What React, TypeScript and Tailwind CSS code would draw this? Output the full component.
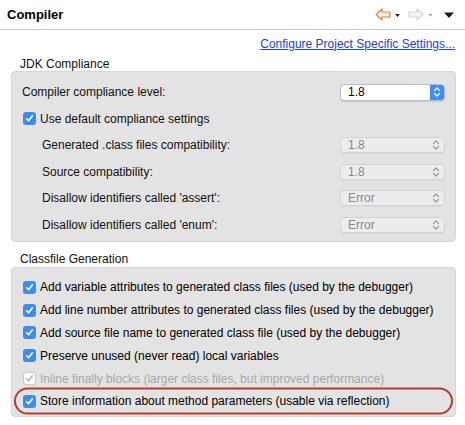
import React from 'react';

const font = { fontFamily: '"Liberation Sans", Arial, sans-serif' };

// Checkbox in mac style
const Check = ({ disabled = false }: { disabled?: boolean }) => (
  <span
    className={`flex h-[13px] w-[13px] shrink-0 items-center justify-center rounded-[3px] ${
      disabled ? 'border border-[#c9c9c9] bg-white' : 'bg-[#3b8df4]'
    }`}
  >
    <svg width="9" height="9" viewBox="0 0 9 9">
      <path
        d="M1.6 4.8 L3.6 6.8 L7.4 1.8"
        fill="none"
        stroke={disabled ? '#b5b5b5' : '#ffffff'}
        strokeWidth="1.6"
        strokeLinecap="round"
        strokeLinejoin="round"
      />
    </svg>
  </span>
);

const Chevrons = ({ color }: { color: string }) => (
  <svg width="8" height="12" viewBox="0 0 8 12">
    <path d="M1.5 4.5 L4 2 L6.5 4.5 M1.5 7.5 L4 10 L6.5 7.5" fill="none" stroke={color} strokeWidth="1.2" strokeLinecap="round" strokeLinejoin="round" />
  </svg>
);

const Select = ({ value, disabled = false }: { value: string; disabled?: boolean }) =>
  disabled ? (
    <div className="flex h-[16px] w-[105px] items-center justify-between rounded-[4px] border border-[#d3d3d3] bg-[#ececec] pl-[7px] pr-[4px] text-[#8a8a8a] shadow-[0_1px_0_rgba(0,0,0,0.04)]">
      <span>{value}</span>
      <Chevrons color="#9a9a9a" />
    </div>
  ) : (
    <div className="flex h-[17px] w-[105px] items-stretch overflow-hidden rounded-[4px] border border-[#bdbdbd] bg-white shadow-[0_1px_1px_rgba(0,0,0,0.12)]">
      <span className="flex flex-1 items-center pl-[7px] text-black">{value}</span>
      <span className="flex w-[14px] items-center justify-center bg-[#3d8ff5]">
        <Chevrons color="#ffffff" />
      </span>
    </div>
  );

const Row = ({ label, value, disabled }: { label: string; value: string; disabled?: boolean }) => (
  <div className="flex h-[26.5px] items-center justify-between pl-[30px] pr-[10px]">
    <span>{label}</span>
    <Select value={value} disabled={disabled} />
  </div>
);

const CheckRow = ({ label, disabled = false, circled = false }: { label: string; disabled?: boolean; circled?: boolean }) => (
  <div className="relative flex h-[22.8px] items-center gap-[4px] whitespace-nowrap pl-[11px]">
    <Check disabled={disabled} />
    <span className={disabled ? 'text-[#a8a8a8]' : 'text-black'}>{label}</span>
    {circled && (
      <span className="absolute left-[2px] right-[2px] top-1/2 h-[27px] -translate-y-1/2 rounded-full border-2 border-[#b63a2e]" />
    )}
  </div>
);

const App: React.FC = () => {
  return (
    <div className="h-[425px] w-[465px] overflow-hidden bg-white text-[12px] text-[#111]" style={font}>
      {/* header */}
      <div className="flex h-[30px] items-center justify-between border-b border-[#c9c9c9] pl-[7px] pr-[10px]">
        <span className="text-[13px] font-bold text-black">Compiler</span>
        <div className="flex items-center">
          <svg width="16" height="13" viewBox="0 0 16 13">
            <path d="M1 6.5 L7 1 L7 4 L15 4 L15 9 L7 9 L7 12 Z" fill="#fbeedd" stroke="#c98a4f" strokeWidth="1.2" strokeLinejoin="round" />
          </svg>
          <svg width="9" height="6" viewBox="0 0 9 6" className="ml-[2px]">
            <path d="M2 2 L7 2 L4.5 5 Z" fill="#222" />
          </svg>
          <svg width="16" height="13" viewBox="0 0 16 13" className="ml-[6px]">
            <path d="M15 6.5 L9 1 L9 4 L1 4 L1 9 L9 9 L9 12 Z" fill="#f4f4f4" stroke="#d6d6d6" strokeWidth="1.2" strokeLinejoin="round" />
          </svg>
          <svg width="9" height="6" viewBox="0 0 9 6" className="ml-[2px]">
            <path d="M2.5 2 L6.5 2 L4.5 4.5 Z" fill="#9a9a9a" />
          </svg>
          <svg width="12" height="8" viewBox="0 0 12 8" className="ml-[8px]">
            <path d="M1 1.5 L11 1.5 L6 7 Z" fill="#1c1c1c" />
          </svg>
        </div>
      </div>

      {/* link */}
      <div className="flex h-[27px] items-center justify-end pr-[10px]">
        <span className="text-[#2340d6] underline">Configure Project Specific Settings...</span>
      </div>

      {/* JDK Compliance */}
      <div className="flex h-[14px] items-center pl-[20px]">JDK Compliance</div>
      <div className="ml-[11px] mr-[9px] rounded-[4px] border border-[#d6d6d6] bg-[#e3e3e3] pb-[3px] pt-[7px]">
        <div className="flex h-[26.5px] items-center justify-between pl-[10px] pr-[10px]">
          <span>Compiler compliance level:</span>
          <Select value="1.8" />
        </div>
        <div className="flex h-[26.5px] items-center gap-[4px] pl-[11px]">
          <Check />
          <span>Use default compliance settings</span>
        </div>
        <Row label="Generated .class files compatibility:" value="1.8" disabled />
        <Row label="Source compatibility:" value="1.8" disabled />
        <Row label="Disallow identifiers called 'assert':" value="Error" disabled />
        <Row label="Disallow identifiers called 'enum':" value="Error" disabled />
      </div>

      {/* Classfile Generation */}
      <div className="flex h-[25px] items-center pl-[20px] pt-[8px]">Classfile Generation</div>
      <div className="ml-[11px] mr-[9px] rounded-[4px] border border-[#d6d6d6] bg-[#e3e3e3] pb-[3px] pt-[8px]">
        <CheckRow label="Add variable attributes to generated class files (used by the debugger)" />
        <CheckRow label="Add line number attributes to generated class files (used by the debugger)" />
        <CheckRow label="Add source file name to generated class file (used by the debugger)" />
        <CheckRow label="Preserve unused (never read) local variables" />
        <CheckRow label="Inline finally blocks (larger class files, but improved performance)" disabled />
        <CheckRow label="Store information about method parameters (usable via reflection)" circled />
      </div>
    </div>
  );
};

export default App;
